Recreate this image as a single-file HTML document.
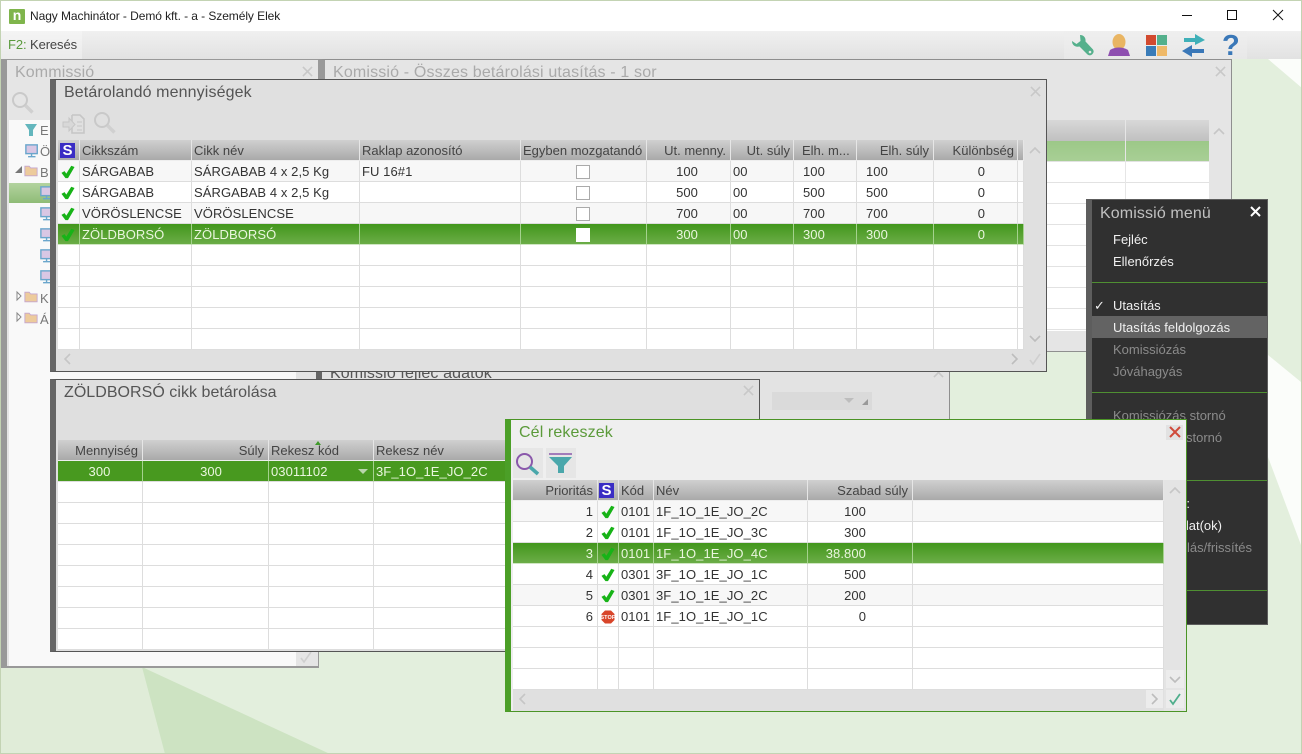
<!DOCTYPE html>
<html><head><meta charset="utf-8"><title>Nagy Machinátor</title>
<style>
html,body{margin:0;padding:0;width:1302px;height:754px;overflow:hidden;background:#e3efdd;font:13px/20px "Liberation Sans",sans-serif;color:#333}
div,svg,table,span{position:absolute}
td svg,th svg,td span,th span{position:static}
.w{box-sizing:border-box;overflow:hidden}
.t{font-size:16px;line-height:20px;white-space:nowrap;letter-spacing:.12px}
table{border-collapse:separate;border-spacing:0;table-layout:fixed;letter-spacing:.08px;background:#fff}
th,td{box-sizing:border-box;height:21px;padding:2px 2px 0;line-height:18px;border-right:1px solid #ddd;border-bottom:1px solid #ddd;font-weight:400;white-space:nowrap;overflow:hidden;text-align:left;color:#333}
th{background:linear-gradient(#d0d0d0,#a9a9a9);color:#444;border-right:1px solid #e6e6e6;border-bottom:1px solid #eee;letter-spacing:0}
tr.o td{background:#f7f7f7}
tr.g td{background:linear-gradient(#42961c,#6bad47);color:#eaf6de;border-right-color:#a5d28e;border-bottom-color:#cfe6c2}
tr.s td{background:#48991f;color:#eaf6de;border-right-color:#a5d28e}
.r{text-align:right}
th.n,td.n{padding:0}
.c{width:14px;height:14px;display:block;margin:2px 0 0 3px}
.sb{display:block;width:15px;height:15px;margin:0 0 0 2px;background:#3a2dc4;color:#fff;font:bold 15px/15px "Liberation Sans",sans-serif;text-align:center}
.cb{display:block;box-sizing:border-box;width:14px;height:14px;border:1px solid #aaa;background:#fff;margin:0 auto;transform:translateX(-1px)}
.g td .cb{border-color:#fff}
.m{left:21px;color:#f0f0f0;white-space:nowrap;line-height:24px;height:22px}
.d{color:#8b8b8b}
.sep{left:0;width:175px;height:1px;background:#4f8f32}
</style></head><body>
<svg width="0" height="0" style="left:0;top:0"><defs>
<symbol id="k" viewBox="0 0 15 15"><polygon points="0.5,8.5 3.8,6.5 5.7,9.2 11,0.8 14.5,2.2 7.5,14 4.8,14" fill="#17b317"/></symbol>
<symbol id="up" viewBox="0 0 12 8"><path d="M1 7L6 2L11 7" fill="none" stroke="#c6c6c6" stroke-width="1.6"/></symbol>
<symbol id="dn" viewBox="0 0 12 8"><path d="M1 1L6 6L11 1" fill="none" stroke="#bdbdbd" stroke-width="1.6"/></symbol>
<symbol id="rt" viewBox="0 0 8 12"><path d="M1 1L6 6L1 11" fill="none" stroke="#bdbdbd" stroke-width="1.6"/></symbol>
<symbol id="lf" viewBox="0 0 8 12"><path d="M7 1L2 6L7 11" fill="none" stroke="#c6c6c6" stroke-width="1.6"/></symbol>
<symbol id="ok" viewBox="0 0 14 14"><path d="M2 8L5 12L12 2" fill="none" stroke="#cfcfcf" stroke-width="1.6"/></symbol>
<symbol id="x" viewBox="0 0 12 12"><path d="M1 1L11 11M11 1L1 11" fill="none" stroke="#c8c8c8" stroke-width="1.7"/></symbol>
<symbol id="mg" viewBox="0 0 24 24"><circle cx="9" cy="9" r="7" fill="none" stroke="#c9c9c9" stroke-width="2"/><path d="M14.5 14.5L21.5 21.5" stroke="#d0d0d0" stroke-width="3.4"/></symbol>
<symbol id="mon" viewBox="0 0 16 16"><rect x="1" y="1" width="13" height="10" fill="#d9c7e4" stroke="#6aa6cc" stroke-width="1.6"/><path d="M7.5 11V14M3.5 14.5H12" stroke="#6aa6cc" stroke-width="1.6"/></symbol>
<symbol id="fo" viewBox="0 0 16 14"><path d="M1 2H6L7.5 4H15V13H1Z" fill="#edcb9c" stroke="#c4a5cf"/></symbol>
</defs></svg>

<!-- background -->
<svg width="1302" height="754" style="left:0;top:0">
<rect width="1302" height="754" fill="#e3efdd"/>
<polygon points="1268,59 1302,59 1302,88" fill="#fbfdfa"/>
<polygon points="1268,355 1301,382 1301,545 1268,457" fill="#fbfdfa"/>
<polygon points="0,660 142,667 165,754 0,754" fill="#e0ecd8"/>
<polygon points="142,667 330,754 165,754" fill="#cde3c2"/>
<rect x="0.5" y="0.5" width="1301" height="753" fill="none" stroke="#c3d3b3"/>
</svg>

<!-- title bar -->
<div style="left:1px;top:1px;width:1300px;height:30px;background:#fff"></div>
<div style="left:9px;top:9px;width:16px;height:15px;background:#7fb54c;border-radius:1px"></div>
<div style="left:9px;top:6px;width:16px;text-align:center;color:#fff;font:bold 14px/18px 'Liberation Sans',sans-serif">n</div>
<div style="left:30px;top:6px;font-size:12px;line-height:20px;color:#222;white-space:nowrap;letter-spacing:-.07px">Nagy Machinátor - Demó kft. - a - Személy Elek</div>
<svg width="120" height="14" style="left:1175px;top:8px"><path d="M7 7.5H17" stroke="#111"/><rect x="52.5" y="2.5" width="9" height="9" fill="none" stroke="#111"/><path d="M98 2L108 12M108 2L98 12" stroke="#111" fill="none"/></svg>

<!-- toolbar -->
<div style="left:1px;top:31px;width:1300px;height:28px;background:linear-gradient(#f0f0f0,#e2e2e2)"></div>
<div style="left:1px;top:31px;width:81px;height:28px;background:linear-gradient(#f4f4f4,#ebebeb)"></div>
<div style="left:8px;top:35px;white-space:nowrap;font-size:13px;line-height:20px;letter-spacing:-.1px"><span style="position:static;color:#5a9a3c">F2:</span> <span style="position:static;color:#444">Keresés</span></div>
<div style="left:1064px;top:31px;width:183px;height:28px;background:linear-gradient(#efefef,#e8e8e8)"></div>
<svg width="190" height="28" style="left:1064px;top:31px">
<path d="M16 4C20 4 22 7 21.5 10.5L29 18.5A3.8 3.8 0 0 1 23.5 23.5L15.5 15.5C11 16.5 8 14 8 10L12.5 13L16.5 10Z" fill="#55b08c"/><circle cx="26" cy="21" r="1.3" fill="#e8e8e8"/>
<ellipse cx="55" cy="11" rx="6.5" ry="8" fill="#e9b563"/><path d="M44 25L46 19Q50 16.5 55 16.5Q60 16.5 64 19L66 25Z" fill="#8e4fb0"/>
<rect x="82" y="4" width="10" height="10" fill="#d24a2f"/><rect x="93" y="4" width="10" height="10" fill="#54b08c"/><rect x="82" y="15" width="10" height="10" fill="#3a7cb8"/><rect x="93" y="15" width="10" height="10" fill="#efb968"/>
<polygon points="120,7 131,7 131,3 141,9 131,14 131,11 120,11" fill="#3fb0b8"/>
<polygon points="118,20 128,14 128,18 140,18 140,22 128,22 128,26" fill="#3a78b8"/>
</svg>
<div style="left:1222px;top:31px;font:bold 29px/30px 'Liberation Sans',sans-serif;color:#3a78b8">?</div>

<!-- Kommissió window -->
<div class="w" style="left:1px;top:59px;width:318px;height:609px;background:#e5e5e5;border:1px solid #999;border-width:1px 1px 2px 6px;border-color:#999">
<div class="t" style="left:8px;top:3px;color:#aaa">Kommissió</div>
<svg width="11" height="11" style="left:295px;top:6px"><use href="#x"/></svg>
<svg width="24" height="24" style="left:4px;top:31px"><use href="#mg"/></svg>
<div style="left:2px;top:60px;width:288px;height:547px;background:#f9f9f9"></div>
<div style="left:2px;top:123px;width:50px;height:20px;background:linear-gradient(#b3d39f,#8fbc77)"></div>
<svg width="50" height="220" style="left:2px;top:60px">
<polygon points="16,4 28,4 24,10 24,16 20,16 20,10" fill="#63b6bd"/>
<use href="#mon" x="16" y="24" width="14" height="14"/>
<polygon points="13,53 6,53 13,46" fill="#777"/><use href="#fo" x="15" y="44" width="14" height="13"/>
<use href="#mon" x="31" y="66" width="14" height="14"/><use href="#mon" x="31" y="87" width="14" height="14"/><use href="#mon" x="31" y="108" width="14" height="14"/><use href="#mon" x="31" y="129" width="14" height="14"/><use href="#mon" x="31" y="150" width="14" height="14"/>
<path d="M8 172V180L12 176Z M8 193V201L12 197Z" fill="#fff" stroke="#888"/><use href="#fo" x="15" y="170" width="14" height="13"/><use href="#fo" x="15" y="191" width="14" height="13"/>
</svg>
<div style="left:33px;top:61px;color:#777;line-height:20px">E</div>
<div style="left:33px;top:82px;color:#777">Ö</div>
<div style="left:33px;top:103px;color:#777">B</div>
<div style="left:33px;top:229px;color:#777">K</div>
<div style="left:33px;top:250px;color:#777">Á</div>
<div style="left:289px;top:60px;width:22px;height:547px;background:#e5e5e5"></div>
<svg width="14" height="14" style="left:292px;top:590px"><use href="#ok"/></svg>
</div>

<!-- Összes betárolási window -->
<div class="w" style="left:318px;top:59px;width:914px;height:293px;background:#e5e5e5;border:1px solid #8f8f8f;border-left:7px solid #999">
<div class="t" style="left:8px;top:3px;color:#aaa;letter-spacing:.16px">Komissió - Összes betárolási utasítás - 1 sor</div>
<svg width="11" height="11" style="left:890px;top:6px"><use href="#x"/></svg>
<div style="left:700px;top:60px;width:184px;height:21px;background:linear-gradient(#d8d8d8,#c0c0c0)"></div>
<div style="left:700px;top:81px;width:184px;height:190px;background:repeating-linear-gradient(#fff 0,#fff 20px,#e2e2e2 20px,#e2e2e2 21px)"></div>
<div style="left:700px;top:81px;width:184px;height:20px;background:linear-gradient(#9cc888,#a8cf95)"></div>
<div style="left:800px;top:60px;width:1px;height:211px;background:#e6e6e6"></div>
<svg width="12" height="8" style="left:888px;top:67px"><use href="#up"/></svg>
</div>

<!-- Fejléc adatok window -->
<div class="w" style="left:316px;top:362px;width:634px;height:70px;background:#e3e3e3;border:1px solid #8f8f8f;border-left:6px solid #666">
<div class="t" style="left:8px;top:1px;color:#555">Komissió fejléc adatok</div>
<svg width="11" height="11" style="left:611px;top:4px"><use href="#x"/></svg>
<div style="left:450px;top:29px;width:100px;height:18px;background:#dadada"></div>
<svg width="30" height="12" style="left:520px;top:33px"><polygon points="2,2 12,2 7,7" fill="#bdbdbd"/><polygon points="26,3 26,9 20,9" fill="#999"/></svg>
</div>

<!-- Komissió menü -->
<div class="w" style="left:1086px;top:199px;width:182px;height:426px;background:#303030;border:1px solid #5d5d5d;border-left:6px solid #5d5d5d;color:#f0f0f0">
<div class="t" style="left:8px;top:4px;color:#c0c0c0">Komissió menü</div>
<svg width="12" height="12" style="left:157px;top:5px"><path d="M2 2L11 11M11 2L2 11" stroke="#fff" stroke-width="2"/></svg>
<div class="m" style="top:28px">Fejléc</div>
<div class="m" style="top:50px">Ellenőrzés</div>
<div class="sep" style="top:82px"></div>
<div class="m" style="left:2px;top:94px">✓</div>
<div class="m" style="top:94px">Utasítás</div>
<div style="left:0;top:116px;width:175px;height:22px;background:#636363"></div>
<div class="m" style="top:116px">Utasítás feldolgozás</div>
<div class="m d" style="top:138px">Komissiózás</div>
<div class="m d" style="top:160px">Jóváhagyás</div>
<div class="sep" style="top:192px"></div>
<div class="m d" style="top:204px">Komissiózás stornó</div>
<div class="m d" style="top:226px">Jóváhagyás stornó</div>
<div class="sep" style="top:280px"></div>
<div class="m" style="left:auto;right:77px;top:292px">Lekérdezések:</div>
<div class="m" style="left:auto;right:45px;top:314px">Raktári bizonylat(ok)</div>
<div class="m d" style="left:auto;right:15px;top:336px">Újraszámolás/frissítés</div>
<div class="sep" style="top:390px"></div>
</div>

<!-- Betárolandó mennyiségek -->
<div class="w" style="left:50px;top:79px;width:997px;height:293px;background:#e0e0e0;border:1px solid #555;border-left:6px solid #666">
<div class="t" style="left:8px;top:3px;color:#555">Betárolandó mennyiségek</div>
<svg width="11" height="11" style="left:974px;top:6px"><use href="#x"/></svg>
<svg width="24" height="22" style="left:6px;top:33px"><path d="M10 2H18L22 6V20H10V15M10 9V2" fill="none" stroke="#c6c6c6" stroke-width="1.6"/><path d="M1 9H7V5L13 11.5L7 18V14H1Z" fill="#d8d8d8" stroke="#c6c6c6"/><path d="M15 9H20M15 13H20M15 17H20" stroke="#c6c6c6"/></svg>
<svg width="24" height="24" style="left:37px;top:31px"><use href="#mg"/></svg>
<table style="left:2px;top:60px;width:966px">
<colgroup><col style="width:22px"><col style="width:112px"><col style="width:168px"><col style="width:161px"><col style="width:126px"><col style="width:84px"><col style="width:63px"><col style="width:63px"><col style="width:77px"><col style="width:84px"><col style="width:6px"></colgroup>
<tr><th class="n"><span class="sb">S</span></th><th>Cikkszám</th><th>Cikk név</th><th>Raklap azonosító</th><th>Egyben mozgatandó</th><th class="r" style="padding-right:4px">Ut. menny.</th><th class="r" style="padding-right:3px">Ut. súly</th><th style="padding-left:8px">Elh. m...</th><th class="r" style="padding-right:4px">Elh. súly</th><th class="r" style="padding-right:3px">Különbség</th><th></th></tr>
<tr class="o"><td class="n"><svg class="c"><use href="#k"/></svg></td><td>SÁRGABAB</td><td>SÁRGABAB 4 x 2,5 Kg</td><td>FU 16#1</td><td><span class="cb"></span></td><td class="r" style="padding-right:32px">100</td><td>00</td><td style="padding-left:9px">100</td><td style="padding-left:9px">100</td><td class="r" style="padding-right:32px">0</td><td></td></tr>
<tr><td class="n"><svg class="c"><use href="#k"/></svg></td><td>SÁRGABAB</td><td>SÁRGABAB 4 x 2,5 Kg</td><td></td><td><span class="cb"></span></td><td class="r" style="padding-right:32px">500</td><td>00</td><td style="padding-left:9px">500</td><td style="padding-left:9px">500</td><td class="r" style="padding-right:32px">0</td><td></td></tr>
<tr class="o"><td class="n"><svg class="c"><use href="#k"/></svg></td><td>VÖRÖSLENCSE</td><td>VÖRÖSLENCSE</td><td></td><td><span class="cb"></span></td><td class="r" style="padding-right:32px">700</td><td>00</td><td style="padding-left:9px">700</td><td style="padding-left:9px">700</td><td class="r" style="padding-right:32px">0</td><td></td></tr>
<tr class="g"><td class="n"><svg class="c"><use href="#k"/></svg></td><td>ZÖLDBORSÓ</td><td>ZÖLDBORSÓ</td><td></td><td><span class="cb"></span></td><td class="r" style="padding-right:32px">300</td><td>00</td><td style="padding-left:9px">300</td><td style="padding-left:9px">300</td><td class="r" style="padding-right:32px">0</td><td></td></tr>
<tr><td></td><td></td><td></td><td></td><td></td><td></td><td></td><td></td><td></td><td></td><td></td></tr>
<tr><td></td><td></td><td></td><td></td><td></td><td></td><td></td><td></td><td></td><td></td><td></td></tr>
<tr><td></td><td></td><td></td><td></td><td></td><td></td><td></td><td></td><td></td><td></td><td></td></tr>
<tr><td></td><td></td><td></td><td></td><td></td><td></td><td></td><td></td><td></td><td></td><td></td></tr>
<tr><td></td><td></td><td></td><td></td><td></td><td></td><td></td><td></td><td></td><td></td><td></td></tr>
</table>
<svg width="12" height="8" style="left:973px;top:66px"><use href="#up"/></svg>
<svg width="12" height="8" style="left:973px;top:255px"><use href="#dn"/></svg>
<svg width="8" height="12" style="left:7px;top:273px"><use href="#lf"/></svg>
<svg width="8" height="12" style="left:955px;top:273px"><use href="#rt"/></svg>
<svg width="14" height="14" style="left:972px;top:272px"><use href="#ok"/></svg>
</div>

<!-- ZÖLDBORSÓ -->
<div class="w" style="left:50px;top:379px;width:710px;height:273px;background:#dfdfdf;border:1px solid #555;border-left:6px solid #666">
<div class="t" style="left:8px;top:3px;color:#555;letter-spacing:.04px">ZÖLDBORSÓ cikk betárolása</div>
<svg width="11" height="11" style="left:687px;top:5px"><use href="#x"/></svg>
<table style="left:2px;top:60px;width:694px">
<colgroup><col style="width:85px"><col style="width:126px"><col style="width:105px"><col style="width:378px"></colgroup>
<tr><th class="r" style="padding-right:4px">Mennyiség</th><th class="r" style="padding-right:4px">Súly</th><th>Rekesz kód</th><th>Rekesz név</th></tr>
<tr class="s"><td style="text-align:center;padding-left:1px">300</td><td class="r" style="padding-right:46px">300</td><td>03011102</td><td>3F_1O_1E_JO_2C</td></tr>
<tr><td></td><td></td><td></td><td></td></tr>
<tr><td></td><td></td><td></td><td></td></tr>
<tr><td></td><td></td><td></td><td></td></tr>
<tr><td></td><td></td><td></td><td></td></tr>
<tr><td></td><td></td><td></td><td></td></tr>
<tr><td></td><td></td><td></td><td></td></tr>
<tr><td></td><td></td><td></td><td></td></tr>
<tr><td></td><td></td><td></td><td></td></tr>
</table>
<svg width="6" height="5" style="left:259px;top:61px"><polygon points="3,0 6,4 0,4" fill="#3f9a2a"/></svg>
<svg width="12" height="7" style="left:301px;top:88px"><polygon points="1,1 11,1 6,6" fill="#b9d6ab"/></svg>
</div>

<!-- Cél rekeszek -->
<div class="w" style="left:505px;top:419px;width:682px;height:293px;background:#eee;border:1px solid #4b9426;border-left:6px solid #4b9f27">
<div style="left:0;top:0;width:675px;height:60px;background:#efefef"></div>
<div class="t" style="left:8px;top:3px;color:#5b9a3a">Cél rekeszek</div>
<div style="left:655px;top:5px;width:17px;height:15px;background:#e2e2e2"></div>
<svg width="12" height="12" style="left:658px;top:6px"><path d="M1 1L11 11M11 1L1 11" stroke="#cf4a3a" stroke-width="2"/></svg>
<div style="left:2px;top:28px;width:30px;height:30px;background:#e6e6e6"></div>
<div style="left:35px;top:28px;width:30px;height:30px;background:#e6e6e6"></div>
<svg width="26" height="24" style="left:4px;top:32px"><circle cx="9.5" cy="9.5" r="7.5" fill="none" stroke="#8a58ab" stroke-width="2"/><path d="M15 15L23 22" stroke="#4aa7ab" stroke-width="3.6"/></svg>
<svg width="24" height="22" style="left:38px;top:33px"><path d="M0 1H23" stroke="#8a58ab" stroke-width="1.6"/><polygon points="0,4 23,4 15,13 15,20 9,20 9,13" fill="#4aa7ab"/></svg>
<table style="left:2px;top:60px;width:651px">
<colgroup><col style="width:85px"><col style="width:21px"><col style="width:35px"><col style="width:154px"><col style="width:105px"><col style="width:251px"></colgroup>
<tr><th class="r" style="padding-right:4px">Prioritás</th><th class="n"><span class="sb" style="margin-left:1px">S</span></th><th>Kód</th><th>Név</th><th class="r" style="padding-right:4px">Szabad súly</th><th></th></tr>
<tr class="o"><td class="r" style="padding-right:4px">1</td><td class="n"><svg class="c"><use href="#k"/></svg></td><td>0101</td><td>1F_1O_1E_JO_2C</td><td class="r" style="padding-right:46px">100</td><td></td></tr>
<tr><td class="r" style="padding-right:4px">2</td><td class="n"><svg class="c"><use href="#k"/></svg></td><td>0101</td><td>1F_1O_1E_JO_3C</td><td class="r" style="padding-right:46px">300</td><td></td></tr>
<tr class="g"><td class="r" style="padding-right:4px">3</td><td class="n"><svg class="c"><use href="#k"/></svg></td><td>0101</td><td>1F_1O_1E_JO_4C</td><td class="r" style="padding-right:46px">38.800</td><td></td></tr>
<tr><td class="r" style="padding-right:4px">4</td><td class="n"><svg class="c"><use href="#k"/></svg></td><td>0301</td><td>3F_1O_1E_JO_1C</td><td class="r" style="padding-right:46px">500</td><td></td></tr>
<tr class="o"><td class="r" style="padding-right:4px">5</td><td class="n"><svg class="c"><use href="#k"/></svg></td><td>0301</td><td>3F_1O_1E_JO_2C</td><td class="r" style="padding-right:46px">200</td><td></td></tr>
<tr><td class="r" style="padding-right:4px">6</td><td class="n"><svg width="14" height="14" style="display:block;margin:2px 0 0 3px"><polygon points="4,0.5 10,0.5 13.5,4 13.5,10 10,13.5 4,13.5 0.5,10 0.5,4" fill="#d8452a"/><text x="7" y="9" font-size="5.5" font-weight="700" font-family="Liberation Sans" fill="#fff" text-anchor="middle">STOP</text></svg></td><td>0101</td><td>1F_1O_1E_JO_1C</td><td class="r" style="padding-right:46px">0</td><td></td></tr>
<tr><td></td><td></td><td></td><td></td><td></td><td></td></tr>
<tr><td></td><td></td><td></td><td></td><td></td><td></td></tr>
<tr><td></td><td></td><td></td><td></td><td></td><td></td></tr>
</table>
<div style="left:653px;top:60px;width:22px;height:231px;background:#e4e4e4"></div>
<div style="left:2px;top:270px;width:651px;height:21px;background:#e0e0e0"></div>
<svg width="12" height="8" style="left:658px;top:66px"><use href="#up"/></svg>
<div style="left:655px;top:250px;width:18px;height:18px;background:#ececec"></div>
<svg width="12" height="8" style="left:658px;top:256px"><use href="#dn"/></svg>
<svg width="8" height="12" style="left:7px;top:273px"><use href="#lf"/></svg>
<div style="left:635px;top:270px;width:17px;height:18px;background:#ececec"></div>
<svg width="8" height="12" style="left:640px;top:273px"><use href="#rt"/></svg>
<div style="left:655px;top:270px;width:18px;height:18px;background:#ececec"></div>
<svg width="14" height="14" style="left:657px;top:272px"><path d="M2 8L5 12L12 2" fill="none" stroke="#4fae8c" stroke-width="1.8"/></svg>
</div>
</body></html>
